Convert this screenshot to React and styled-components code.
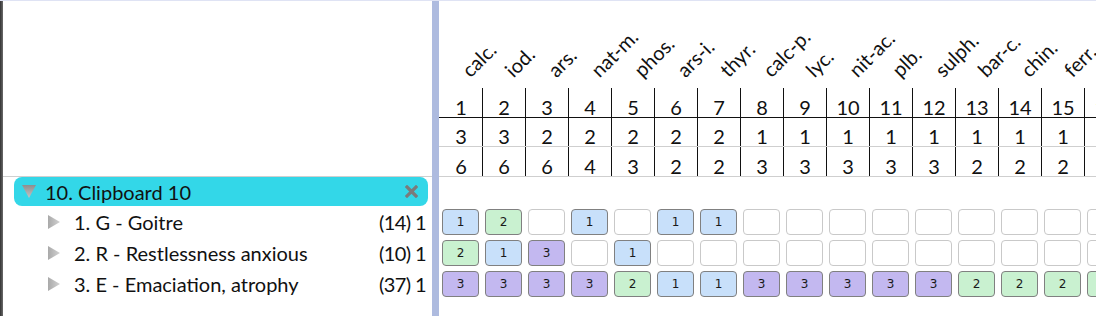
import React from "react";
import styled, { createGlobalStyle } from "styled-components";

const GlobalStyle = createGlobalStyle`
  html, body {
    margin: 0;
    padding: 0;
    background: #fff;
  }
  body {
    font-family: Lato, "Noto Sans", sans-serif;
    color: #111;
  }
`;

const remedies = [
  { name: "calc.", n: 1, a: 3, b: 6 },
  { name: "iod.", n: 2, a: 3, b: 6 },
  { name: "ars.", n: 3, a: 2, b: 6 },
  { name: "nat-m.", n: 4, a: 2, b: 4 },
  { name: "phos.", n: 5, a: 2, b: 3 },
  { name: "ars-i.", n: 6, a: 2, b: 2 },
  { name: "thyr.", n: 7, a: 2, b: 2 },
  { name: "calc-p.", n: 8, a: 1, b: 3 },
  { name: "lyc.", n: 9, a: 1, b: 3 },
  { name: "nit-ac.", n: 10, a: 1, b: 3 },
  { name: "plb.", n: 11, a: 1, b: 3 },
  { name: "sulph.", n: 12, a: 1, b: 3 },
  { name: "bar-c.", n: 13, a: 1, b: 2 },
  { name: "chin.", n: 14, a: 1, b: 2 },
  { name: "ferr.", n: 15, a: 1, b: 2 },
  { name: "graph.", n: 16, a: 1, b: 2 },
];

const rubrics = [
  { label: "1. G - Goitre", count: "(14) 1", grades: [1, 2, 0, 1, 0, 1, 1, 0, 0, 0, 0, 0, 0, 0, 0, 0] },
  { label: "2. R - Restlessness anxious", count: "(10) 1", grades: [2, 1, 3, 0, 1, 0, 0, 0, 0, 0, 0, 0, 0, 0, 0, 0] },
  { label: "3. E - Emaciation, atrophy", count: "(37) 1", grades: [3, 3, 3, 3, 2, 1, 1, 3, 3, 3, 3, 3, 2, 2, 2, 2] },
];

const gradeColors = {
  0: "#ffffff",
  1: "#c8e0fa",
  2: "#c9f1d0",
  3: "#c3b8f0",
};

const Window = styled.div`
  display: flex;
  height: 316px;
  border-top: 1px solid #dfe3f4;
  box-sizing: border-box;
  overflow: hidden;
`;

const EdgeBar = styled.div`
  width: 3px;
  flex-shrink: 0;
  background: linear-gradient(to right, #333, #6b6b6b);
`;

const LeftPane = styled.div`
  width: 429px;
  flex-shrink: 0;
  display: flex;
  flex-direction: column;
`;

const LeftHeader = styled.div`
  height: 175px;
  border-bottom: 1px solid #cfcfcf;
`;

const ClipboardBar = styled.div`
  height: 29px;
  margin: 0 4px 0 11px;
  padding: 0 10px 0 8px;
  display: flex;
  align-items: center;
  gap: 9px;
  background: #33d7e8;
  border-radius: 8px;
  font-size: 20px;
`;

const BarTitle = styled.span`
  flex: 1;
`;

const RubricRow = styled.div`
  height: 31px;
  display: flex;
  align-items: center;
  padding: 0 6px 0 45px;
  font-size: 20px;
`;

const RubricLabel = styled.span`
  flex: 1;
  margin-left: 14px;
  white-space: nowrap;
`;

const Count = styled.span`
  letter-spacing: -0.6px;
  white-space: nowrap;
`;

const Splitter = styled.div`
  width: 7px;
  flex-shrink: 0;
  background: #aebbdf;
`;

const RightPane = styled.div`
  flex: 1;
  overflow: hidden;
  display: flex;
  flex-direction: column;
`;

const HeaderRow = styled.div`
  display: flex;
  padding-left: 1px;
  height: ${(p) => p.$h}px;
  border-bottom: ${(p) => (p.$line ? `1px solid ${p.$line}` : "none")};
  flex-shrink: 0;
`;

const LabelCell = styled.div`
  width: 43px;
  flex-shrink: 0;
  display: flex;
  align-items: flex-end;
  padding: 0 0 8px 32px;
  box-sizing: border-box;
`;

const Label = styled.span`
  display: block;
  white-space: nowrap;
  font-size: 20px;
  line-height: 1;
  transform-origin: 0 100%;
  transform: rotate(-45deg);
`;

const NumCell = styled.div`
  width: 43px;
  flex-shrink: 0;
  box-sizing: border-box;
  border-right: 1px solid #111;
  display: flex;
  align-items: flex-end;
  justify-content: center;
  font-size: 20px;
  line-height: 1;
`;

const BodySpacer = styled.div`
  height: 29px;
  flex-shrink: 0;
`;

const GradeRow = styled.div`
  display: flex;
  padding-left: 1px;
  height: 31px;
  flex-shrink: 0;
`;

const Slot = styled.div`
  width: 43px;
  flex-shrink: 0;
  padding: 3px 4px 2px 2px;
  box-sizing: border-box;
`;

const GradeBox = styled.div`
  height: 26px;
  box-sizing: border-box;
  border: 1px solid ${(p) => (p.$grade ? "#808080" : "#c9c9c9")};
  border-radius: 4px;
  background: ${(p) => gradeColors[p.$grade]};
  display: flex;
  align-items: center;
  justify-content: center;
  font-family: "DejaVu Sans", Verdana, sans-serif;
  font-size: 12px;
  color: #1a1a1a;
`;

const TriangleDown = () => (
  <svg width="14" height="13" viewBox="0 0 14 13">
    <defs>
      <linearGradient id="tdg" x1="0" y1="0" x2="0" y2="1">
        <stop offset="0" stopColor="#8e8e8e" />
        <stop offset="1" stopColor="#c4c4c4" />
      </linearGradient>
    </defs>
    <polygon points="0,0 14,0 7,13" fill="url(#tdg)" />
  </svg>
);

const TriangleRight = () => (
  <svg width="12" height="14" viewBox="0 0 12 14">
    <defs>
      <linearGradient id="trg" x1="0" y1="0" x2="1" y2="0">
        <stop offset="0" stopColor="#a9a9a9" />
        <stop offset="1" stopColor="#d2d2d2" />
      </linearGradient>
    </defs>
    <polygon points="0,0 12,7 0,14" fill="url(#trg)" />
  </svg>
);

const CloseIcon = () => (
  <svg width="13" height="13" viewBox="0 0 13 13">
    <path d="M2 2 L11 11 M11 2 L2 11" stroke="#7b7b7b" strokeWidth="3.2" strokeLinecap="square" />
  </svg>
);

export default function App() {
  return (
    <>
      <GlobalStyle />
      <Window>
        <EdgeBar />
        <LeftPane>
          <LeftHeader />
          <ClipboardBar>
            <TriangleDown />
            <BarTitle>10. Clipboard 10</BarTitle>
            <CloseIcon />
          </ClipboardBar>
          {rubrics.map((r) => (
            <RubricRow key={r.label}>
              <TriangleRight />
              <RubricLabel>{r.label}</RubricLabel>
              <Count>{r.count}</Count>
            </RubricRow>
          ))}
        </LeftPane>
        <Splitter />
        <RightPane>
          <HeaderRow $h={87}>
            {remedies.map((m) => (
              <LabelCell key={m.name}>
                <Label>{m.name}</Label>
              </LabelCell>
            ))}
          </HeaderRow>
          <HeaderRow $h={29} $line="#111">
            {remedies.map((m) => (
              <NumCell key={m.name}>{m.n}</NumCell>
            ))}
          </HeaderRow>
          <HeaderRow $h={28} $line="#cfcfcf">
            {remedies.map((m) => (
              <NumCell key={m.name}>{m.a}</NumCell>
            ))}
          </HeaderRow>
          <HeaderRow $h={29} $line="#cfcfcf">
            {remedies.map((m) => (
              <NumCell key={m.name}>{m.b}</NumCell>
            ))}
          </HeaderRow>
          <BodySpacer />
          {rubrics.map((r) => (
            <GradeRow key={r.label}>
              {r.grades.map((g, i) => (
                <Slot key={i}>
                  <GradeBox $grade={g}>{g || ""}</GradeBox>
                </Slot>
              ))}
            </GradeRow>
          ))}
        </RightPane>
      </Window>
    </>
  );
}
